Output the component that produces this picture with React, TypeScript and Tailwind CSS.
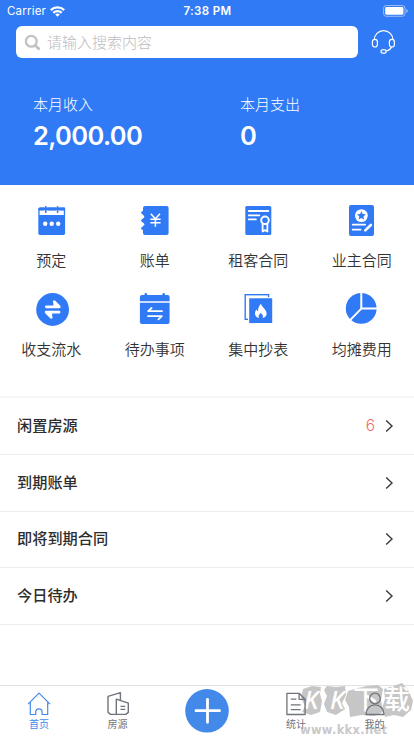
import React from 'react';

const BLUE = '#317af5';

const BookingIcon = () => (
  <svg width="36" height="36" viewBox="0 0 36 36" fill={BLUE}>
    <rect x="4.3" y="5.6" width="26.8" height="27.4" rx="1.7" />
    <path d="M5.6 8.6h24.2v4.4H5.6z" fill="#fff" />
    <path d="M10.200 4h3.200v6h-3.200zM22 4h3.200v6H22z" fill="#fff" />
    <path d="M4.300 7.300a1.700 1.700 0 0 1 1.700-1.700h25.100V8H4.300z" />
    <rect x="10.900" y="4" width="1.800" height="7" rx=".9" />
    <rect x="22.700" y="4" width="1.800" height="7" rx=".9" />
    <g fill="#fff">
      <circle cx="11.2" cy="21.8" r="2.2" />
      <circle cx="17.7" cy="21.8" r="2.2" />
      <circle cx="24.2" cy="21.8" r="2.2" />
    </g>
  </svg>
);

const BillIcon = () => (
  <svg width="36" height="36" viewBox="0 0 36 36">
    <rect x="6" y="4" width="25.6" height="29" rx="2" fill={BLUE} />
    <g fill="#fff">
      <circle cx="5.7" cy="14.7" r="1.6" />
      <circle cx="5.7" cy="22.3" r="1.6" />
    </g>
    <g fill={BLUE}>
      <circle cx="6" cy="10.8" r="1.8" />
      <circle cx="6" cy="18.6" r="1.8" />
      <circle cx="6" cy="26.3" r="1.8" />
    </g>
    <path d="m13.800 11.800 4.600 5 4.600-5M18.400 16.800v8M13.400 17.200h10.200M13.400 20.800h10.200" fill="none" stroke="#fff" strokeWidth="1.5" />
  </svg>
);

const TenantContractIcon = () => (
  <svg width="36" height="36" viewBox="0 0 36 36" fill="none">
    <rect x="4.3" y="4" width="26" height="29" rx="1.6" fill={BLUE} />
    <path d="M7.8 9h19.5M7.8 13.4h10.5M7.8 17.4h7" stroke="#fff" strokeWidth="1.9" strokeLinecap="round" />
    <circle cx="24" cy="18.3" r="3.8" stroke="#fff" strokeWidth="2" />
    <path d="M21.6 22v7.5l2.4-1.4 2.4 1.4V22" stroke="#fff" strokeWidth="1.8" strokeLinejoin="round" />
  </svg>
);

const OwnerContractIcon = () => (
  <svg width="36" height="36" viewBox="0 0 36 36" fill="none">
    <rect x="5" y="3" width="25" height="31" rx="2" fill={BLUE} />
    <circle cx="17.4" cy="13.6" r="6.4" fill="#fff" />
    <path d="m17.4 9.2 1.3 2.7 3 .4-2.2 2.1.6 3-2.7-1.4-2.7 1.4.6-3-2.2-2.1 3-.4z" fill={BLUE} />
    <path d="M8.7 22.7h12.4M8.7 27.7h7.8" stroke="#fff" strokeWidth="1.8" strokeLinecap="round" />
    <path d="m21.3 28.4 5.6-5.4" stroke="#fff" strokeWidth="2.6" strokeLinecap="round" />
  </svg>
);

const CashFlowIcon = () => (
  <svg width="36" height="36" viewBox="0 0 36 36">
    <circle cx="18.6" cy="18.5" r="16.4" fill={BLUE} />
    <path d="M12.400 15.800h12.900l-5-5M25 21.200H12.200l5 5" fill="none" stroke="#fff" strokeWidth="2.8" strokeLinecap="round" strokeLinejoin="round" />
    <path d="m19.4 9.5 7 7h-7zM18.1 27.6l-7-7h7z" fill="#fff" />
  </svg>
);

const TodoIcon = () => (
  <svg width="36" height="36" viewBox="0 0 36 36" fill={BLUE}>
    <path d="M4.9 4h2.6V3.2a1.3 1.3 0 0 1 2.6 0V4h15.3v-.8a1.3 1.3 0 0 1 2.6 0V4h2.6a2 2 0 0 1 2 2v4.2H2.9V6a2 2 0 0 1 2-2Z" />
    <path d="M2.9 11.8h29.7V31a2 2 0 0 1-2 2H4.9a2 2 0 0 1-2-2Z" />
    <path d="M25 20.2H11.2l3.4-3.2M11 25.2h13.8l-3.4 3.2" fill="none" stroke="#fff" strokeWidth="1.8" strokeLinecap="round" strokeLinejoin="round" />
  </svg>
);

const MeterIcon = () => (
  <svg width="36" height="36" viewBox="0 0 36 36">
    <rect x="4.2" y="3.7" width="23.4" height="24.6" fill="#fff" stroke={BLUE} strokeWidth="1.4" />
    <path d="M7 6.2h24.3v26H7z" fill="#fff" />
    <path d="M8.2 7.3h23v24.8h-23z" fill={BLUE} />
    <path d="M20 12.8c.6 3 5.6 6 5.6 9.6 0 2.5-1.7 4-3.9 4.5.8-2.1-.2-3.6-1.9-5-1.7 1.4-2.7 2.9-1.9 5-2.2-.5-3.9-2-3.9-4.5 0-1.6.6-3 1.7-4 .2 1 .7 1.6 1.4 1.9-.2-3 .9-5.5 2.9-7.5Z" fill="#fff" />
  </svg>
);

const ShareIcon = () => (
  <svg width="36" height="36" viewBox="0 0 36 36">
    <circle cx="17.2" cy="17.4" r="15.4" fill={BLUE} />
    <path d="M17.3 1v16.6H34M17.3 17.6 5.600 29.6" fill="none" stroke="#fff" strokeWidth="2" />
  </svg>
);

const menus = [
  { label: '预定', Icon: BookingIcon },
  { label: '账单', Icon: BillIcon },
  { label: '租客合同', Icon: TenantContractIcon },
  { label: '业主合同', Icon: OwnerContractIcon },
  { label: '收支流水', Icon: CashFlowIcon },
  { label: '待办事项', Icon: TodoIcon },
  { label: '集中抄表', Icon: MeterIcon },
  { label: '均摊费用', Icon: ShareIcon },
];

const rows: { label: string; count?: number }[] = [
  { label: '闲置房源', count: 6 },
  { label: '到期账单' },
  { label: '即将到期合同' },
  { label: '今日待办' },
];

const StatusBar = () => (
  <div className="grid h-[22px] grid-cols-3 items-center pl-[7px] pr-[6px] text-[11.5px] leading-none text-white">
    <div className="flex items-center gap-[4px] pt-[1px] tracking-[0.2px]">
      Carrier
      <svg width="15" height="11" viewBox="0 0 15 11" fill="none" stroke="#fff" strokeWidth="2.2">
        <path d="M.8 4.1a9.6 9.6 0 0 1 13.4 0M3.3 6.9a6 6 0 0 1 8.4 0" />
        <path d="M7.5 10.8 5.2 8.5a3.3 3.3 0 0 1 4.6 0Z" fill="#fff" stroke="none" />
      </svg>
    </div>
    <div className="pt-[1px] text-center font-semibold tracking-[0.35px]">7:38 PM</div>
    <svg className="justify-self-end" width="25" height="12" viewBox="0 0 25 12">
      <rect x=".6" y=".5" width="21.4" height="10.8" rx="2.8" fill="none" stroke="#fff" strokeOpacity=".5" />
      <rect x="2.2" y="2.1" width="18.2" height="7.6" rx="1.4" fill="#fff" />
      <path d="M23.3 4v3.8a2 2 0 0 0 0-3.8Z" fill="#fff" fillOpacity=".6" />
    </svg>
  </div>
);

const Header = () => (
  <header className="h-[185px] bg-[#317af5] text-white">
    <StatusBar />
    <div className="flex items-center pl-4 pt-1">
      <div className="flex h-8 w-[342px] items-center rounded-[6px] bg-white pl-[8px] text-[15px] font-light text-[#bcbcbc]">
        <svg className="mr-[6px]" width="17" height="17" viewBox="0 0 17 17" fill="none" stroke="#c2c2c2">
          <circle cx="7.300" cy="7.300" r="5.400" strokeWidth="2.3" />
          <path d="m11.4 11.4 3.400 3.400" strokeWidth="2.8" strokeLinecap="round" />
        </svg>
        <span className="pt-[2px]">请输入搜索内容</span>
      </div>
      <svg className="ml-[13px]" width="26" height="26" viewBox="0 0 26 26" fill="none" stroke="#fff" strokeWidth="1.2">
        <path d="M3.200 11a9.400 9.400 0 0 1 18.800 0" />
        <rect x="1.400" y="10.400" width="5" height="7.600" rx="2.500" />
        <rect x="18.400" y="10.400" width="5" height="7.600" rx="2.500" />
        <path d="M20.500 18c-1.200 2.600-3 3.600-5.200 4" />
        <ellipse cx="12.600" cy="22.400" rx="2.600" ry="1.800" />
      </svg>
    </div>
    <div className="grid grid-cols-2 pl-[33px] pt-[37px]">
      <div>
        <p className="text-[15px] font-light leading-[20px]">本月收入</p>
        <p className="mt-[5px] text-[25.5px] font-semibold leading-[32px] tracking-[-0.62px]">2,000.00</p>
      </div>
      <div className="pl-[16.5px]">
        <p className="text-[15px] font-light leading-[20px]">本月支出</p>
        <p className="mt-[5px] text-[25.5px] font-semibold leading-[32px]">0</p>
      </div>
    </div>
  </header>
);

const tabLabel = 'text-[10px] leading-[12px] mt-[1px]';

const Watermark = () => (
  <div className="absolute right-0 top-[-3px] h-[53px] w-[115px]">
    <svg width="115" height="53" viewBox="0 0 115 53">
      <g fill="#c6c6c6">
        <path d="m4 6 9-3 9 1-1 7 2 7-2 11-9 3-9-3 3-6-4-8z" />
        <path d="m28 3 9 1 9-1 1 9-4 8 3 6-9 6-9-3-3-8 3-8-3-6z" />
        <path d="m49 8 10-3 9-2 11-1 5 4-2 11 2 12-9 4-12-1-12 2-1-10-4-7z" />
        <path d="m85 6 9-3 9-3 5 5 3 6 3 7-2 9-8 7-9-2-9 2-3-9 3-9z" />
      </g>
      <g fill="#fff">
        <g fontSize="25" fontWeight="500" fontFamily="'Noto Sans', sans-serif" fontStyle="italic">
          <text x="5" y="26">K</text>
          <text x="31" y="26">K</text>
        </g>
        <g fontSize="26" fontWeight="500" fontFamily="'Noto Sans CJK SC', sans-serif">
          <text x="54" y="26">下</text>
          <text x="85" y="26">载</text>
        </g>
      </g>
      <text x="1" y="50.500" fontSize="11.5" fontWeight="700" fill="#c9c9c9" textLength="87" fontFamily="'DejaVu Sans', sans-serif">www.kkx.net</text>
    </svg>
  </div>
);

const TabBar = () => (
  <nav className="relative flex h-[51px] border-t-[1.5px] border-[#e2e2e2] bg-white text-[#6f747b]">
    <div className="flex w-[78px] flex-col items-center pt-[5px] text-[#4389ea]">
      <svg width="26" height="26" viewBox="0 0 26 26" fill="none" stroke="currentColor" strokeWidth="1.2" strokeLinejoin="round">
        <path d="M2 13.2 13 2.2l11 11M4.3 11.500v12h5.400V21a3.200 3.200 0 0 1 6.400 0v2.500h5.600v-12" />
      </svg>
      <span className={tabLabel}>首页</span>
    </div>
    <div className="flex w-[79px] flex-col items-center pt-[5px]">
      <svg width="26" height="26" viewBox="0 0 26 26" fill="none" stroke="currentColor" strokeWidth="1.4" strokeLinejoin="round">
        <path d="M14 23.400H5.500l-2.500-2.200V5.400L15.400 1.600v7.600M11.300 23.300V8.200l12 4v9.200l-2.500 2h-7zM15.500 15.400h4.700M15.500 18.400h4.700" />
      </svg>
      <span className={tabLabel}>房源</span>
    </div>
    <div className="flex w-[100px] justify-center pt-[3px]">
      <svg width="44" height="44" viewBox="0 0 44 44">
        <circle cx="22" cy="21.800" r="21.8" fill="#4389ea" />
        <path d="M22.500 10.300v23M11 21.700h23.500" stroke="#fff" strokeWidth="2.8" strokeLinecap="round" />
      </svg>
    </div>
    <Watermark />
    <div className="relative flex w-[78px] flex-col items-center pt-[5px]">
      <svg width="26" height="26" viewBox="0 0 26 26" fill="none" stroke="currentColor" strokeWidth="1.3" strokeLinejoin="round">
        <path d="M3.9 2.300h12.200l6 6v15.200H3.9zM16.1 2.300v6h6M7.800 8.200h5.600M7.800 13.800h9.800M7.800 18.700h9.800" />
      </svg>
      <span className={tabLabel}>统计</span>
    </div>
    <div className="relative flex w-[79px] flex-col items-center pt-[5px]">
      <svg width="26" height="26" viewBox="0 0 26 26" fill="none" stroke="currentColor" strokeWidth="1.3" strokeLinejoin="round">
        <circle cx="13" cy="7.500" r="5.300" />
        <path d="M4 23.500c0-6 4-9.600 9-9.600s9 3.600 9 9.600z" />
      </svg>
      <span className={tabLabel}>我的</span>
    </div>
  </nav>
);

export default function App() {
  return (
    <div className="flex h-[736px] w-[414px] flex-col overflow-hidden bg-white font-['Inter','Noto_Sans_CJK_SC',sans-serif] text-[#333]">
      <Header />

      <div className="grid h-[211px] grid-cols-4 content-start gap-y-[12px] pt-[17px]">
        {menus.map(({ label, Icon }) => (
          <div key={label} className="flex h-[76.5px] flex-col items-center">
            <Icon />
            <span className="mr-[1px] mt-[12px] text-[15px] font-[350] leading-[22px]">{label}</span>
          </div>
        ))}
      </div>

      <div className="border-t-2 border-[#f6f6f6]">
        {rows.map((row) => (
          <div key={row.label} className="flex h-[56.8px] items-center border-b border-[#ececec] pl-[17px] pr-[20px]">
            <span className="flex-1 text-[15.2px] font-medium leading-[22px] text-[#2d2d2d]">{row.label}</span>
            {row.count !== undefined && <span className="mr-[9px] text-[15.5px] font-light text-[#f56c6c]">{row.count}</span>}
            <svg width="10" height="14" viewBox="0 0 10 14" fill="none" stroke="#3a3a3a" strokeWidth="1.4">
              <path d="m2.2 1.5 5.800 5.500-5.800 5.500" />
            </svg>
          </div>
        ))}
      </div>

      <div className="flex-1" />
      <TabBar />
    </div>
  );
}
